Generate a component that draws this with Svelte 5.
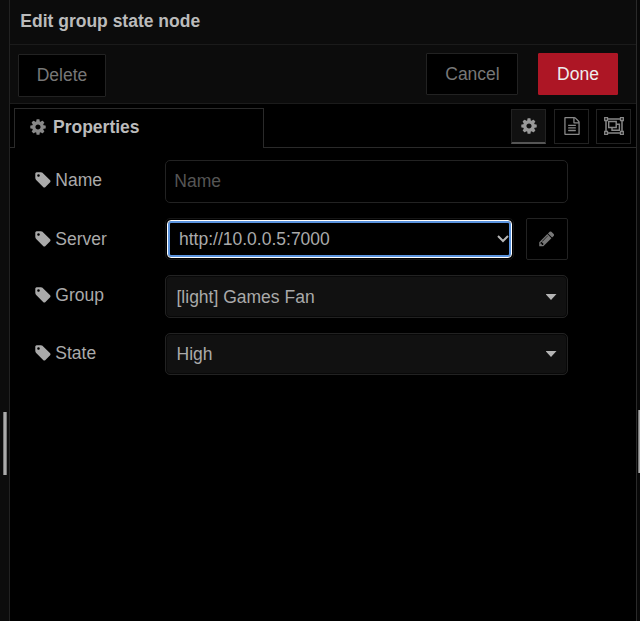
<script>
  const icons = {
    cog: 'M1152 896q0-106-75-181t-181-75-181 75-75 181 75 181 181 75 181-75 75-181zm512-109v222q0 12-8 23t-20 13l-185 28q-19 54-39 91 35 50 107 138 10 12 10 25t-9 23q-27 37-99 108t-94 71q-12 0-26-9l-138-108q-44 23-91 38-16 136-29 186-7 28-36 28h-222q-14 0-24.500-8.500t-11.500-21.500l-28-184q-49-16-90-37l-141 107q-10 9-25 9-14 0-25-11-126-114-165-168-7-10-7-23 0-12 8-23 15-21 51-66.500t54-70.500q-27-50-41-99l-183-27q-13-2-21-12.500t-8-23.500v-222q0-12 8-23t19-13l186-28q14-46 39-92-40-57-107-138-10-12-10-24 0-10 9-23 26-36 98.500-107.500t94.500-71.500q13 0 26 10l138 107q44-23 91-38 16-136 29-186 7-28 36-28h222q14 0 24.500 8.500t11.500 21.500l28 184q49 16 90 37l142-107q9-9 24-9 13 0 25 10 129 119 165 170 7 8 7 22 0 12-8 23-15 21-51 66.500t-54 70.500q26 50 41 98l183 28q13 2 21 12.500t8 23.500z',
    tag: 'M576 448q0-53-37.500-90.500t-90.500-37.500-90.500 37.500-37.500 90.500 37.500 90.500 90.500 37.500 90.500-37.500 37.500-90.500zm1067 576q0 53-37 90l-491 492q-39 37-91 37-53 0-90-37l-715-716q-38-37-64.500-101t-26.500-117v-416q0-52 38-90t90-38h416q53 0 117 26.500t102 64.500l715 714q37 39 37 91z',
    pencil: 'M491 1536l91-91-235-235-91 91v107h128v128h107zm523-928q0-22-22-22-10 0-17 7l-542 542q-7 7-7 17 0 22 22 22 10 0 17-7l542-542q7-7 7-17zm-54-192l416 416-832 832h-416v-416zm683 96q0 53-37 90l-166 166-416-416 166-165q36-38 90-38 53 0 91 38l235 234q37 39 37 91z',
    file: 'M1596 380q28 28 48 76t20 88v1152q0 40-28 68t-68 28h-1344q-40 0-68-28t-28-68v-1600q0-40 28-68t68-28h896q40 0 88 20t76 48zm-444-244v376h376q-10-29-22-41l-313-313q-12-12-41-22zm384 1528v-1024h-416q-40 0-68-28t-28-68v-416h-768v1536h1280zm-1024-864q0-14 9-23t23-9h704q14 0 23 9t9 23v64q0 14-9 23t-23 9h-704q-14 0-23-9t-9-23v-64zm736 224q14 0 23 9t9 23v64q0 14-9 23t-23 9h-704q-14 0-23-9t-9-23v-64q0-14 9-23t23-9h704zm0 256q14 0 23 9t9 23v64q0 14-9 23t-23 9h-704q-14 0-23-9t-9-23v-64q0-14 9-23t23-9h704z'
  };
</script>

{#snippet icon(name, size)}
  <svg width={size} height={size} viewBox="0 0 1792 1792" fill="currentColor"><path d={icons[name]} /></svg>
{/snippet}

{#snippet label(text)}
  <span class="label">{@render icon('tag', 18)}<span>{text}</span></span>
{/snippet}

<div class="app">
  <div class="gutter"><div class="grip"></div></div>
  <main class="tray">
    <header>Edit group state node</header>
    <div class="toolbar">
      <button class="delete">Delete</button>
      <button class="cancel">Cancel</button>
      <button class="done">Done</button>
    </div>
    <nav>
      <div class="tab">{@render icon('cog', 18)}<span>Properties</span></div>
      <div class="views">
        <button class="view active" aria-label="Properties">{@render icon('cog', 18)}</button>
        <button class="view file" aria-label="Description">{@render icon('file', 18)}</button>
        <button class="view" aria-label="Appearance">
          <svg width="20" height="18" viewBox="0 0 20 18" fill="none" stroke="currentColor" stroke-width="1.300">
            <path d="M3.500 2h13M3.500 16h13M2 3.500v11M18 3.500v11" stroke-width="1.500" />
            <path d="M.7 .7h2.800v2.800H.7zM16.500 .7h2.800v2.800h-2.800zM.7 14.500h2.800v2.800H.7zM16.500 14.500h2.800v2.800h-2.800z" />
            <path d="M4.700 4.500h7.500v6H4.700zM12.200 7.300h3.200v6H8v-2.600" stroke-width="1.400" />
          </svg>
        </button>
      </div>
    </nav>
    <section class="form">
      <div class="row name">
        {@render label('Name')}
        <div class="box input">Name</div>
      </div>
      <div class="row server">
        {@render label('Server')}
        <div class="select">
          <div class="focus">
            <span>http://10.0.0.5:7000</span>
            <svg width="12" height="8" viewBox="0 0 12 8" fill="none" stroke="#b5b5b5" stroke-width="2"><path d="M1 1l5 5 5-5" /></svg>
          </div>
        </div>
        <button class="edit" aria-label="Edit server">{@render icon('pencil', 17.5)}</button>
      </div>
      <div class="row group">
        {@render label('Group')}
        <div class="box drop"><span>[light] Games Fan</span><i></i></div>
      </div>
      <div class="row state">
        {@render label('State')}
        <div class="box drop"><span>High</span><i></i></div>
      </div>
    </section>
  </main>
  <div class="edge"><div class="grip"></div></div>
</div>

<style>
  :global(body) { margin: 0; background: #000; }
  .app {
    display: flex;
    width: 640px;
    height: 621px;
    overflow: hidden;
    background: #000;
    color: #aaa;
    font: 17.500px/25px "Liberation Sans", Arial, sans-serif;
  }
  .app * { box-sizing: border-box; }
  svg { display: block; flex: none; }
  button {
    display: flex;
    align-items: center;
    justify-content: center;
    padding: 0;
    margin: 0;
    border: 1px solid #222;
    background: #000;
    color: #777;
    font: inherit;
  }
  .gutter { width: 10px; padding: 412px 0 0 3px; background: #0c0c0c; border-right: 1px solid #222; }
  .grip { width: 4px; height: 63px; background: #aaa; border: solid #777; border-width: 0 1px; }
  .tray { width: 626px; }
  .edge { width: 4px; padding: 410px 0 0 1px; background: #080808; border-left: 1px solid #2a2a2a; }
  .edge .grip { width: 2px; border-width: 0 0 0 1px; }
  header {
    height: 45px;
    padding: 9px 10px 0 10.300px;
    border-bottom: 1px solid #1b1b1b;
    background: #0c0c0c;
    color: #bbb;
    font-weight: bold;
  }
  .toolbar {
    display: flex;
    align-items: flex-start;
    height: 59px;
    padding: 8px 18px 0 8px;
    border-bottom: 1px solid #1b1b1b;
    background: #0c0c0c;
  }
  .toolbar button { height: 42px; border-radius: 1px; }
  .toolbar .delete { width: 88px; height: 43px; margin: 1px auto 0 0; }
  .toolbar .cancel { width: 92px; margin-right: 20px; padding-left: 1px; }
  .toolbar .done { width: 80px; background: #ad1625; border-color: #ad1625; color: #eee; }
  nav {
    display: flex;
    justify-content: space-between;
    height: 44px;
    padding: 4px 5px 0 4px;
    background: linear-gradient(#2a2a2a, #2a2a2a) bottom / 100% 1px no-repeat #000;
  }
  .tab {
    display: flex;
    align-items: center;
    gap: 6px;
    width: 250px;
    height: 40px;
    padding: 0 0 2px 14px;
    border: 1px solid #2a2a2a;
    border-bottom: 0;
    background: #000;
    color: #bbb;
    font-weight: bold;
  }
  .tab svg { color: #888; margin-top: -2px; }
  .views { display: flex; padding-top: 1px; gap: 7.500px; }
  .view { width: 35px; height: 35px; color: #888; }
  .view.file { padding: 0 0 2px 1px; }
  .view.active { background: #111; border-bottom: 2px solid #555; color: #999; }
  .view:last-child { padding-bottom: 1px; }
  .form { display: flex; flex-direction: column; padding: 12px 0 0 23px; }
  .row { display: flex; height: 43px; margin-bottom: 15px; }
  .server { height: 42px; }
  .label { display: flex; align-items: flex-start; width: 132px; padding: 8px 0 0 1px; }
  .label svg { margin-top: 2.500px; }
  .label span { margin-left: 3.300px; }
  .server .label { padding-top: 9px; }
  .box {
    display: flex;
    align-items: center;
    width: 403px;
    height: 43px;
    border: 1px solid #222;
    border-radius: 5px;
  }
  .input { padding-left: 8.300px; color: #555; }
  .drop {
    justify-content: space-between;
    padding: 0 10.500px 0 10.500px;
    background: #111;
    box-shadow: inset 0 0 0 1px #080808;
  }
  .group .drop { padding-top: 1px; }
  .drop i { width: 11px; height: 6px; background: #b5b5b5; clip-path: polygon(0 0, 100% 0, 50% 100%); }
  .state .box { height: 42px; }
  .select { width: 349px; height: 42px; padding: 2px 1px 2px; border: 1px solid #151515; border-radius: 5px; }
  .focus {
    display: flex;
    align-items: center;
    justify-content: space-between;
    height: 38px;
    margin-top: -1px;
    padding: 0 2px 0 11px;
    border: 1px solid #fff;
    border-radius: 4px;
    box-shadow: inset 0 0 0 2px #5b94df;
  }
  .edit { width: 42px; height: 42px; margin-left: 12px; border-radius: 2px; }
</style>
